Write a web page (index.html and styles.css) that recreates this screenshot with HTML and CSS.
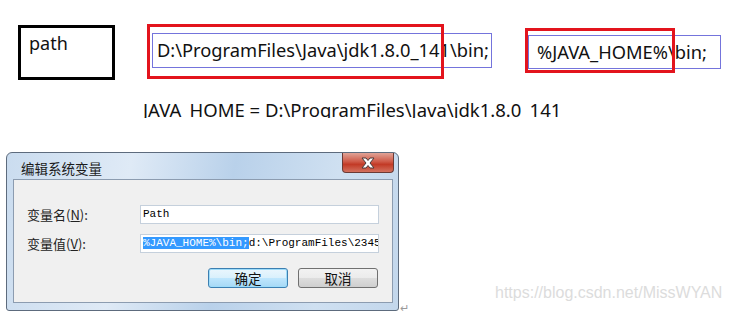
FILE: index.html
```html
<!DOCTYPE html>
<html lang="zh-CN">
<head>
    <meta charset="UTF-8">
    <title>Path 配置</title>
    <link rel="stylesheet" href="styles.css">
</head>
<body>
<div class="page">

    <!-- 变量名 / 变量值 对比 -->
    <div class="compare">
        <div class="var-name">path</div>
        <div class="var-value long">
            D:\ProgramFiles\Java\jdk1.8.0_141\bin;
            <div class="mark mark-long"></div>
        </div>
        <div class="var-value short">
            %JAVA_HOME%\bin;
            <div class="mark mark-short"></div>
        </div>
    </div>

    <div class="note"><span>JAVA_HOME = D:\ProgramFiles\Java\jdk1.8.0_141</span></div>

    <!-- 编辑系统变量 对话框 -->
    <div class="dialog-row">
        <div class="dialog">
            <div class="titlebar">
                <span class="title">编辑系统变量</span>
                <div class="close">
                    <svg width="18" height="12" viewBox="0 0 18 12">
                        <path d="M3 1h4l2 2.5 2-2.5h4l-4 5 4 5h-4l-2-2.5-2 2.5H3l4-5z" fill="#fff" stroke="#4a3a3a" stroke-width="1" stroke-linejoin="round"/>
                    </svg>
                </div>
            </div>
            <div class="panel">
                <div class="fields">
                    <label>变量名(<u>N</u>):</label>
                    <div class="input">Path</div>
                    <label>变量值(<u>V</u>):</label>
                    <div class="input"><span class="selected">%JAVA_HOME%\bin;</span>d:\ProgramFiles\2345Soft</div>
                </div>
                <div class="buttons">
                    <button class="btn default">确定</button>
                    <button class="btn">取消</button>
                </div>
            </div>
        </div>
        <span class="para">↵</span>
    </div>

    <div class="watermark">https://blog.csdn.net/MissWYAN</div>
</div>
</body>
</html>
```

FILE: styles.css
```css
* {
    box-sizing: border-box;
}

body {
    margin: 0;
    background-color: #fff;
    font-family: 'Noto Sans', 'Noto Sans CJK SC', sans-serif;
    color: #111;
}

.page {
    position: relative;
    width: 730px;
    height: 314px;
    overflow: hidden;
}

/* Fila superior */
.compare {
    display: flex;
    align-items: flex-start;
    padding-top: 25px;
}

.var-name {
    margin-left: 18px;
    width: 97px;
    height: 55px;
    border: 3px solid #000;
    padding: 4px 0 0 8px;
    font-size: 18px;
    line-height: 22px;
}

.var-value {
    position: relative;
    border: 1px solid #7474dc;
    font-size: 18.3px;
    line-height: 31px;
    white-space: nowrap;
}

.long {
    margin-left: 37px;
    margin-top: 8px;
    width: 340px;
    height: 35px;
    padding-left: 4px;
}

.short {
    margin-left: 36px;
    margin-top: 10px;
    width: 193px;
    height: 34px;
    padding-left: 8px;
}

/* Recuadros rojos */
.mark {
    position: absolute;
    border: 3px solid #e3141d;
}

.mark-long {
    left: -6px;
    top: -10px;
    width: 297px;
    height: 55px;
}

.mark-short {
    left: -4px;
    top: -8px;
    width: 150px;
    height: 45px;
}

/* La línea queda recortada por abajo, como en la captura */
.note {
    margin: 19px 0 0 143px;
    height: 19px;
    overflow: hidden;
    font-size: 18.5px;
    line-height: 22px;
    white-space: nowrap;
}

/* Dialogo */
.dialog-row {
    display: flex;
    align-items: flex-end;
    margin-top: 34px;
}

.dialog {
    margin-left: 6px;
    width: 393px;
    height: 159px;
    border: 1px solid #5d6b7d;
    border-radius: 6px 6px 3px 3px;
    background: linear-gradient(100deg, #cadcef 0%, #dfeaf6 30%, #b9d1ea 55%, #cfe0f1 80%, #c3d7ec 100%);
    padding: 0 5px 7px 6px;
    display: flex;
    flex-direction: column;
}

.titlebar {
    display: flex;
    justify-content: space-between;
    height: 26px;
}

.title {
    font-family: 'Noto Sans CJK SC', sans-serif;
    font-size: 13.5px;
    line-height: 30px;
    padding-left: 8px;
    color: #1b1b1b;
}

.close {
    width: 52px;
    height: 20px;
    margin-right: -1px;
    border: 1px solid #6b3a35;
    border-top: none;
    border-radius: 0 0 4px 4px;
    background: linear-gradient(#e0a397 0%, #cf5a48 45%, #c23a26 60%, #d3715f 100%);
    display: flex;
    align-items: center;
    justify-content: center;
}

.panel {
    flex: 1;
    background-color: #f0f0f0;
    border: 1px solid #8c9cb0;
    padding: 25px 14px 0 13px;
}

.fields {
    display: grid;
    grid-template-columns: 113px 239px;
    row-gap: 10px;
    align-items: center;
}

.fields label {
    font-family: 'Noto Sans CJK SC', sans-serif;
    font-size: 13px;
    color: #222;
}

.fields label u {
    text-decoration-thickness: 1px;
}

.input {
    height: 19px;
    background-color: #fff;
    border: 1px solid #c5d0dc;
    font-family: 'Liberation Mono', monospace;
    font-size: 11px;
    line-height: 17px;
    padding-left: 2px;
    white-space: nowrap;
    overflow: hidden;
    color: #000;
}

.selected {
    background-color: #3399ff;
    color: #fff;
}

.buttons {
    display: flex;
    justify-content: flex-end;
    gap: 10px;
    margin-top: 15px;
}

.btn {
    width: 80px;
    height: 20px;
    font-family: 'Noto Sans CJK SC', sans-serif;
    font-size: 13.5px;
    line-height: 16px;
    padding: 0;
    color: #111;
    border: 1px solid #707070;
    border-radius: 3px;
    background: linear-gradient(#f2f2f2 0%, #ebebeb 50%, #dddddd 51%, #cfcfcf 100%);
}

.btn.default {
    border-color: #3c7fb1;
    background: linear-gradient(#eaf6fd 0%, #d9f0fc 50%, #bee6fd 51%, #a7d9f5 100%);
    box-shadow: inset 0 0 0 1px #9ddcfa;
}

.para {
    font-size: 11px;
    color: #9a9a9a;
    margin-left: 1px;
    line-height: 12px;
    margin-bottom: -3px;
}

/* Marca de agua */
.watermark {
    position: absolute;
    left: 495px;
    top: 284px;
    font-family: 'Liberation Sans', sans-serif;
    font-size: 16px;
    color: #dcdcdc;
}
```
